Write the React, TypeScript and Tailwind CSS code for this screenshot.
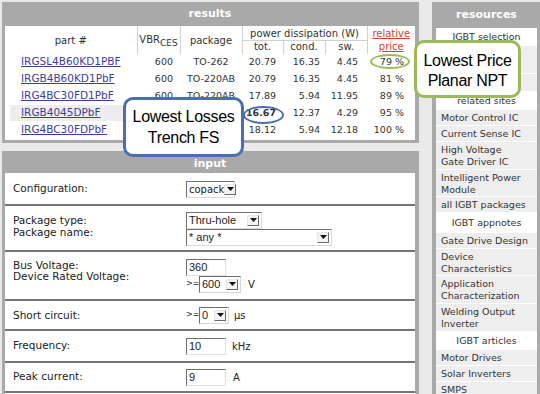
import React from "react";

const rows = [
  { part: "IRGSL4B60KD1PBF", v: "600", pkg: "TO-262", tot: "20.79", cond: "16.35", sw: "4.45", price: "79 %" },
  { part: "IRGB4B60KD1PbF", v: "600", pkg: "TO-220AB", tot: "20.79", cond: "16.35", sw: "4.45", price: "81 %" },
  { part: "IRG4BC30FD1PbF", v: "600", pkg: "TO-220AB", tot: "17.89", cond: "5.94", sw: "11.95", price: "89 %" },
  { part: "IRGB4045DPbF", v: "600", pkg: "TO-220AB", tot: "16.67", cond: "12.37", sw: "4.29", price: "95 %" },
  { part: "IRG4BC30FDPbF", v: "600", pkg: "TO-220AB", tot: "18.12", cond: "5.94", sw: "12.18", price: "100 %" },
];

type Res = { t: string; head?: string; pad?: string };
const P = "pb-[1px] pt-[2px]";
const resources: Res[] = [
  { t: "IGBT selection", head: "h-[18px]" },
  { t: "Selector\nGuide", pad: P },
  { t: "Cross Ref", pad: "pb-[2px] pt-[3px]" },
  { t: "related sites", head: "h-[18px]" },
  { t: "Motor Control IC", pad: P },
  { t: "Current Sense IC", pad: P },
  { t: "High Voltage\nGate Driver IC", pad: P },
  { t: "Intelligent Power\nModule", pad: "pb-0 pt-[2px]" },
  { t: "all IGBT packages", pad: P },
  { t: "IGBT appnotes", head: "h-[20px]" },
  { t: "Gate Drive Design", pad: P },
  { t: "Device\nCharacteristics", pad: "pb-0 pt-[2px]" },
  { t: "Application\nCharacterization", pad: P },
  { t: "Welding Output\nInverter", pad: P },
  { t: "IGBT articles", head: "h-[18px]" },
  { t: "Motor Drives", pad: P },
  { t: "Solar Inverters", pad: P },
  { t: "SMPS", pad: P },
];

function Arrow() {
  return (
    <div className="ml-auto mr-[2px] flex h-[11px] w-[12px] shrink-0 items-center justify-center border border-t-[#e8e8e8] border-l-[#e8e8e8] border-r-[#6a6a6a] border-b-[#6a6a6a] bg-[#f4f4f4]">
      <svg width="7" height="4" viewBox="0 0 7 4">
        <path d="M0 0 H7 L3.5 4 Z" fill="#111" />
      </svg>
    </div>
  );
}

function Sel({ cls, text, font }: { cls: string; text: string; font: string }) {
  return (
    <div className={`flex h-[17px] items-center border border-t-[#6f6f6f] border-l-[#6f6f6f] border-r-[#d8d8d8] border-b-[#d8d8d8] bg-white text-[#222] ${font} ${cls}`}>
      <span className="whitespace-nowrap pl-[2px] leading-[13px]">{text}</span>
      <Arrow />
    </div>
  );
}

function Inp({ text }: { text: string }) {
  return (
    <div className="flex h-[17px] w-[40px] items-center border border-t-[#6f6f6f] border-l-[#6f6f6f] border-r-[#e0e0e0] border-b-[#e0e0e0] bg-white font-['Liberation_Sans',sans-serif] text-[11px] text-[#222]">
      <span className="pl-[2px] leading-[13px]">{text}</span>
    </div>
  );
}

export default function App() {
  const V = "font-['DejaVu_Sans',sans-serif]";
  const A = "font-['Liberation_Sans',sans-serif] text-[11px]";
  return (
    <div className={`relative flex h-[394px] w-[540px] overflow-hidden bg-[#e9e9e9] ${V}`}>
      {/* left column */}
      <div className="flex w-[420px] flex-col pl-[2px] pt-[2px]">
        {/* results panel */}
        <div className="w-[417px] bg-[#a9a9a9] pb-[3px] pl-[3px] pr-[4px]">
          <div className="flex h-[24px] items-center justify-center pt-[1px] text-[11px] font-bold text-white">results</div>
          <table className="w-[410px] table-fixed border-collapse bg-white text-[#333]">
            <colgroup>
              <col className="w-[132px]" />
              <col className="w-[43px]" />
              <col className="w-[62px]" />
              <col className="w-[41px]" />
              <col className="w-[42px]" />
              <col className="w-[42px]" />
              <col className="w-[48px]" />
            </colgroup>
            <thead>
              <tr className="h-[14px]">
                <th rowSpan={2} className="border-r border-[#d0d0d0] p-0 pt-[2px] text-[10px] font-normal leading-[13px]">part #</th>
                <th rowSpan={2} className="border-r border-[#d0d0d0] p-0 text-[10px] font-normal leading-[13px]">
                  VBR<sub className="text-[9px]">CES</sub>
                </th>
                <th rowSpan={2} className="border-r border-[#d0d0d0] p-0 pt-[2px] text-[10px] font-normal leading-[13px]">package</th>
                <th colSpan={3} className="border-b border-r border-[#d0d0d0] p-0 pt-[2px] text-[10px] font-normal leading-[12px]">power dissipation (W)</th>
                <th rowSpan={2} className="p-0 text-[10px] font-normal leading-[13px]">
                  <span className="text-[#d2442a] underline">relative<br />price</span>
                </th>
              </tr>
              <tr className="h-[13px]">
                <th className="border-r border-[#d0d0d0] p-0 text-[10px] font-normal leading-[12px]">tot.</th>
                <th className="border-r border-[#d0d0d0] p-0 text-[10px] font-normal leading-[12px]">cond.</th>
                <th className="border-r border-[#d0d0d0] p-0 text-[10px] font-normal leading-[12px]">sw.</th>
              </tr>
            </thead>
            <tbody className="text-[9.5px]">
              {rows.map((r, i) => (
                <tr key={r.part} className="h-[17px]">
                  <td className="p-0 pl-[5px]">
                    <div className={`flex h-[16px] w-[120px] items-center pl-[11px] ${i === 3 ? "bg-[#ededed]" : ""}`}>
                      <span className="text-[10.5px] text-[#3d3d9e] underline">{r.part}</span>
                    </div>
                  </td>
                  <td className="p-0 pr-[7px] text-right">{r.v}</td>
                  <td className="p-0 text-center">{r.pkg}</td>
                  <td className={`p-0 pr-[7px] text-right ${i === 3 ? "font-bold" : ""}`}>{r.tot}</td>
                  <td className="p-0 pr-[5px] text-right">{r.cond}</td>
                  <td className="p-0 pr-[9px] text-right">{r.sw}</td>
                  <td className="p-0 pr-[11px] text-right">{r.price}</td>
                </tr>
              ))}
              <tr className="h-[1px]"><td colSpan={7} className="p-0"></td></tr>
            </tbody>
          </table>
        </div>

        {/* input panel */}
        <div className="mt-[8px] flex w-[417px] flex-1 flex-col bg-[#a9a9a9] pl-[3px] pr-[4px]">
          <div className="flex h-[22px] justify-center pt-[6px] text-[11px] font-bold leading-[13px] text-white">input</div>
          <div className="flex-1 bg-white text-[10.5px] text-[#222]">
            {/* configuration */}
            <div className="flex h-[33px] border-b-2 border-[#767676] pl-[8px] pt-[8px]">
              <div className="w-[173px] pt-[1px] leading-[12px]">Configuration:</div>
              <Sel cls="w-[49px] text-[10px]" text="copack" font={V} />
            </div>
            {/* package */}
            <div className="flex h-[46px] border-b-2 border-[#767676] pl-[8px] pt-[6px]">
              <div className="w-[173px] pt-[2px] leading-[12px]">Package type:<br />Package name:</div>
              <div className="flex flex-col">
                <Sel cls="w-[76px]" text="Thru-hole" font={A} />
                <Sel cls="w-[146px]" text="* any *" font={A} />
              </div>
            </div>
            {/* bus voltage */}
            <div className="flex h-[49px] border-b-2 border-[#767676] pl-[8px] pt-[7px]">
              <div className="w-[173px] pt-[1px] leading-[11.5px]">Bus Voltage:<br />Device Rated Voltage:</div>
              <div className="flex flex-col">
                <Inp text="360" />
                <div className="flex items-center">
                  <span className="mr-[2px] w-[11px] text-[8px] leading-[10px]">&gt;=</span>
                  <Sel cls="w-[42px]" text="600" font={A} />
                  <span className="ml-[7px] text-[10px]">V</span>
                </div>
              </div>
            </div>
            {/* short circuit */}
            <div className="flex h-[30px] border-b-2 border-[#767676] pl-[8px] pt-[6px]">
              <div className="w-[173px] pt-[2px] leading-[12px]">Short circuit:</div>
              <div className="flex items-center self-start">
                <span className="mr-[2px] w-[11px] text-[8px] leading-[10px]">&gt;=</span>
                <Sel cls="w-[30px]" text="0" font={A} />
                <span className="ml-[5px] text-[10px]">μs</span>
              </div>
            </div>
            {/* frequency */}
            <div className="flex h-[32px] border-b-2 border-[#767676] pl-[8px] pt-[7px]">
              <div className="w-[173px] pt-[1px] leading-[12px]">Frequency:</div>
              <div className="flex items-center self-start">
                <Inp text="10" />
                <span className="ml-[6px] text-[10px]">kHz</span>
              </div>
            </div>
            {/* peak current */}
            <div className="flex h-[30px] border-b-2 border-[#767676] pl-[8px] pt-[6px]">
              <div className="w-[173px] pt-[1px] leading-[12px]">Peak current:</div>
              <div className="flex items-center self-start">
                <Inp text="9" />
                <span className="ml-[7px] text-[10px]">A</span>
              </div>
            </div>
          </div>
        </div>
      </div>

      {/* right column */}
      <div className="ml-[12px] flex flex-1 flex-col pt-[2px]">
        <div className="flex flex-1 flex-col bg-[#a9a9a9] pl-[4px] pr-[3px]">
          <div className="flex h-[26px] items-center justify-center pt-[1px] text-[11px] font-bold text-white">resources</div>
          <div className="flex flex-1 flex-col bg-white text-[9.5px] text-[#333]">
            {resources.map((r) => (
              <div
                key={r.t}
                className={
                  r.head
                    ? `flex shrink-0 items-center justify-center bg-white leading-[12px] ${r.head}`
                    : `shrink-0 whitespace-pre-line border-b border-white bg-[#eeeeee] px-[5px] leading-[12px] ${r.pad}`
                }
              >
                {r.t}
              </div>
            ))}
          </div>
        </div>
      </div>

      {/* callouts */}
      <div className="absolute left-[243px] top-[106px] h-[18px] w-[41px] rounded-[50%] border-[2.5px] border-[#4a6fae]" />
      <div className="absolute left-[370px] top-[54px] h-[15px] w-[40px] rounded-[50%] border-[2.5px] border-[#9bbb59]" />
      <div className="absolute left-[123px] top-[97px] flex h-[60px] w-[121px] flex-col items-center justify-center rounded-[10px] border-[3px] border-[#4a6fae] bg-white font-['Liberation_Sans',sans-serif] text-[16px] leading-[21px] tracking-[-0.3px] text-black">
        <span>Lowest Losses</span>
        <span>Trench FS</span>
      </div>
      <div className="absolute left-[414px] top-[40px] flex h-[58px] w-[107px] flex-col items-center justify-center rounded-[10px] border-[3px] border-[#9bbb59] bg-white pt-[3px] font-['Liberation_Sans',sans-serif] text-[16px] leading-[20px] tracking-[-0.3px] text-black">
        <span>Lowest Price</span>
        <span>Planar NPT</span>
      </div>
    </div>
  );
}
